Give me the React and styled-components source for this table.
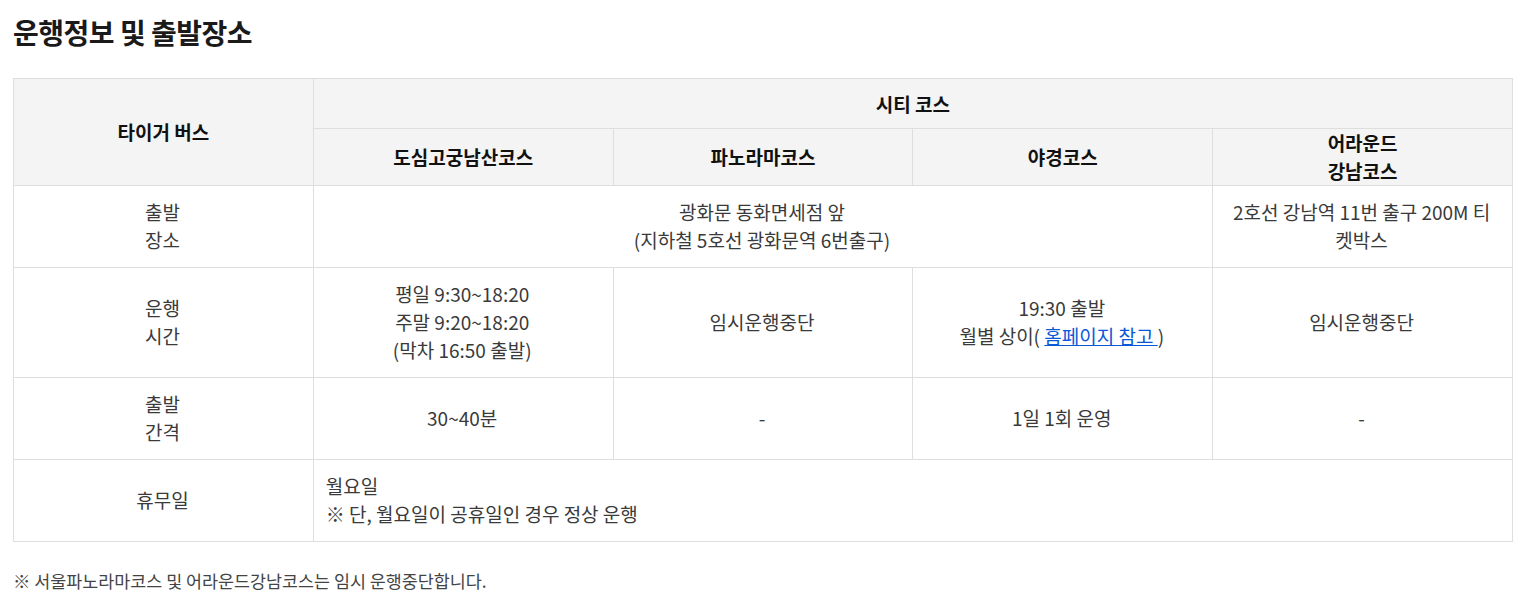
import React from "react";
import styled, { createGlobalStyle } from "styled-components";

const Global = createGlobalStyle`
  html, body { margin: 0; padding: 0; background: #fff; }
  body { font-family: "Noto Sans CJK KR", "Noto Sans", sans-serif; color: #333; }
`;

const Page = styled.div`
  padding: 12px 13px 0 13px;
  width: 1500px;
`;

const Title = styled.h2`
  margin: 0 0 26px 0;
  font-size: 28px;
  line-height: 40px;
  font-weight: 700;
  color: #1a1a1a;
  letter-spacing: -0.5px;
`;

const Table = styled.table`
  width: 1500px;
  border-collapse: collapse;
  table-layout: fixed;
  border: 1px solid #dedede;
`;

const Th = styled.th`
  background: #f4f4f4;
  border: 1px solid #dedede;
  font-size: 19px;
  line-height: 28px;
  font-weight: 700;
  color: #111;
  padding: 0 10px;
  text-align: center;
  height: ${(p) => (p.$h ? `${p.$h}px` : "auto")};
`;

const Td = styled.td`
  border: 1px solid #dedede;
  font-size: 19px;
  line-height: 28px;
  font-weight: 400;
  color: #3a3a3a;
  padding: 12px 14px 13px 12px;
  text-align: ${(p) => (p.$left ? "left" : "center")};
  vertical-align: middle;
`;

const Link = styled.a`
  color: #0a57d8;
  text-decoration: underline;
`;

const Note = styled.p`
  margin: 25px 0 0 0;
  font-size: 17.4px;
  line-height: 28px;
  color: #444;
`;

export default function App() {
  return (
    <>
      <Global />
      <Page>
        <Title>운행정보 및 출발장소</Title>
        <Table>
          <colgroup>
            <col style={{ width: "20%" }} />
            <col style={{ width: "20%" }} />
            <col style={{ width: "20%" }} />
            <col style={{ width: "20%" }} />
            <col style={{ width: "20%" }} />
          </colgroup>
          <thead>
            <tr>
              <Th rowSpan={2}>타이거 버스</Th>
              <Th colSpan={4} $h={49}>시티 코스</Th>
            </tr>
            <tr>
              <Th>도심고궁남산코스</Th>
              <Th>파노라마코스</Th>
              <Th>야경코스</Th>
              <Th>
                어라운드
                <br />
                강남코스
              </Th>
            </tr>
          </thead>
          <tbody>
            <tr>
              <Td>
                출발
                <br />
                장소
              </Td>
              <Td colSpan={3}>
                광화문 동화면세점 앞
                <br />
                (지하철 5호선 광화문역 6번출구)
              </Td>
              <Td>2호선 강남역 11번 출구 200M 티켓박스</Td>
            </tr>
            <tr>
              <Td>
                운행
                <br />
                시간
              </Td>
              <Td>
                평일 9:30~18:20
                <br />
                주말 9:20~18:20
                <br />
                (막차 16:50 출발)
              </Td>
              <Td>임시운행중단</Td>
              <Td>
                19:30 출발
                <br />
                월별 상이( <Link href="#">홈페이지 참고 </Link>)
              </Td>
              <Td>임시운행중단</Td>
            </tr>
            <tr>
              <Td>
                출발
                <br />
                간격
              </Td>
              <Td>30~40분</Td>
              <Td>-</Td>
              <Td>1일 1회 운영</Td>
              <Td>-</Td>
            </tr>
            <tr>
              <Td>휴무일</Td>
              <Td colSpan={4} $left>
                월요일
                <br />※ 단, 월요일이 공휴일인 경우 정상 운행
              </Td>
            </tr>
          </tbody>
        </Table>
        <Note>※ 서울파노라마코스 및 어라운드강남코스는 임시 운행중단합니다.</Note>
      </Page>
    </>
  );
}
